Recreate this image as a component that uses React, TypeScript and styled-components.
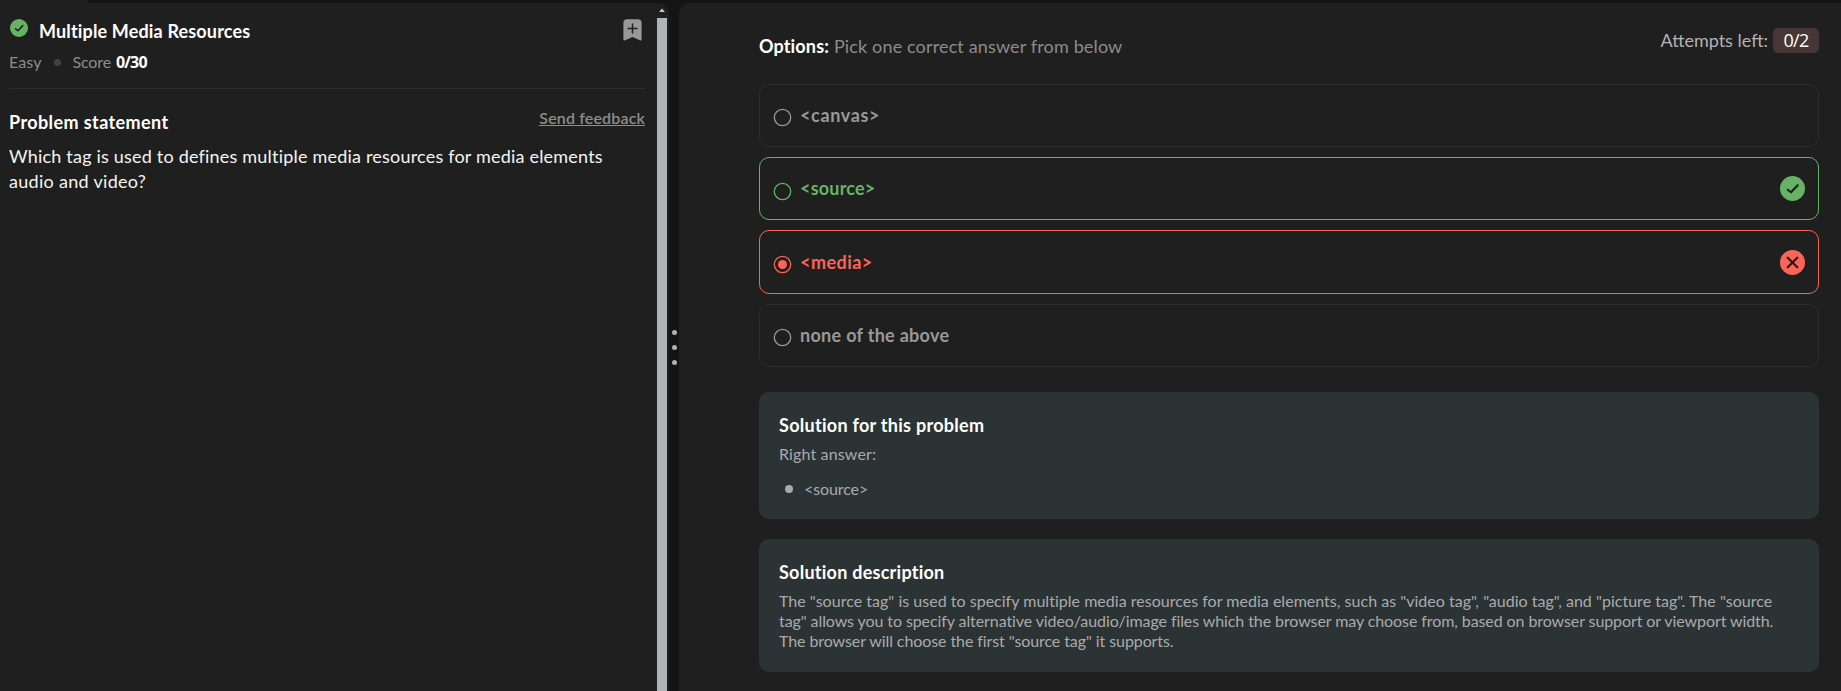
import React from "react";
import styled, { createGlobalStyle } from "styled-components";

const color = {
  page: "#141414",
  panel: "#1f1f1f",
  line: "#2d2d2d",
  white: "#ffffff",
  muted: "#8c8c8c",
  soft: "#a9abab",
  green: "#66b366",
  red: "#fb6559",
  card: "#2c3335",
};

const GlobalStyle = createGlobalStyle`
  * { box-sizing: border-box; }
  body {
    margin: 0;
    background: ${color.page};
    font-family: Lato, "Open Sans", sans-serif;
    overflow: hidden;
  }
`;

const Text = styled.span<{ $spacing?: number }>`
  letter-spacing: ${(p) => p.$spacing ?? 0}px;
  white-space: nowrap;
`;

const Page = styled.div`
  display: flex;
  flex-direction: column;
  height: 691px;
`;

const TopStrip = styled.div`
  flex: none;
  width: 88px;
  height: 3px;
  background: ${color.panel};
`;

const Workspace = styled.main`
  display: flex;
  flex: 1;
  min-height: 0;
`;

const ProblemPanel = styled.section`
  display: flex;
  width: 669px;
  padding-right: 2px;
  background: ${color.panel};
  border-top-right-radius: 10px;
`;

const ProblemBody = styled.div`
  flex: 1;
  padding: 16px 12px 0 9px;
`;

const ScrollTrack = styled.div`
  display: flex;
  flex-direction: column;
  align-items: center;
  width: 10px;
`;

const ScrollArrow = styled.svg`
  display: block;
  flex: none;
  width: 10px;
  height: 15px;
`;

const ScrollThumb = styled.div`
  flex: 1;
  width: 10px;
  background: #b2b3b9;
`;

const Splitter = styled.div`
  display: flex;
  flex-direction: column;
  align-items: center;
  gap: 10px;
  width: 10px;
  padding: 327px 0 0 1px;
`;

const SplitterDot = styled.i`
  width: 5px;
  height: 5px;
  border-radius: 50%;
  background: #b0b0b0;
`;

const ProblemHeader = styled.header`
  display: flex;
  justify-content: space-between;
  padding-bottom: 16px;
  border-bottom: 1px solid ${color.line};
`;

const TitleRow = styled.div`
  display: flex;
  align-items: flex-start;
  height: 24px;
  padding-left: 1px;
`;

const Title = styled.h1`
  margin: 0 0 0 10px;
  padding-left: 1px;
  font-size: 18px;
  font-weight: 700;
  line-height: 24px;
  color: ${color.white};
`;

const Meta = styled.div`
  display: flex;
  align-items: center;
  margin-top: 9px;
  font-size: 16px;
  line-height: 20px;
  color: ${color.muted};
`;

const MetaDot = styled.i`
  width: 7px;
  height: 7px;
  margin: 1px 12px 0 12px;
  border-radius: 50%;
  background: #424242;
`;

const Points = styled.strong`
  margin-left: 5px;
  font-family: "Open Sans", sans-serif;
  font-size: 16px;
  font-weight: 700;
  color: ${color.white};
`;

const BookmarkIcon = styled.svg`
  display: block;
  width: 19px;
  height: 22px;
  margin: 0 3px 0 0;
`;

const StatementHead = styled.div`
  display: flex;
  justify-content: space-between;
  align-items: flex-start;
  padding-top: 19px;
`;

const Heading = styled.h2`
  margin: 0;
  font-size: 18px;
  font-weight: 700;
  line-height: 24px;
  color: ${color.white};
`;

const StatementHeading = styled(Heading)`
  margin-top: 2px;
`;

const FeedbackLink = styled.a`
  height: 18px;
  border-bottom: 1px solid ${color.muted};
  font-size: 16px;
  font-weight: 600;
  line-height: 20px;
  color: ${color.muted};
`;

const Statement = styled.p`
  display: flex;
  flex-direction: column;
  margin: 10px 0 0;
  font-size: 18px;
  line-height: 25px;
  color: #f4f4f4;
`;

const AnswerPanel = styled.section`
  flex: 1;
  padding: 25px 22px 0 80px;
  background: ${color.panel};
  border-top-left-radius: 10px;
`;

const AnswerHead = styled.header`
  display: flex;
  justify-content: space-between;
  align-items: flex-start;
  height: 55.7px;
  font-size: 18px;
`;

const Prompt = styled.div`
  display: flex;
  gap: 5px;
  margin-top: 6px;
  line-height: 24px;
  color: ${color.muted};

  b {
    color: ${color.white};
  }
`;

const Attempts = styled.div`
  display: flex;
  align-items: center;
  gap: 5px;
  line-height: 25px;
  color: #b3b3b3;
`;

const AttemptsBadge = styled.span`
  display: flex;
  justify-content: center;
  width: 46px;
  height: 25px;
  border-radius: 5px;
  background: #483637;
  font-family: "Open Sans", sans-serif;
  color: ${color.white};
`;

const OptionList = styled.div`
  display: flex;
  flex-direction: column;
  gap: 10px;
`;

const Option = styled.label<{ $tone: string; $edge: string }>`
  display: flex;
  align-items: center;
  height: 63.33px;
  padding: 0 13px 0 13px;
  border: 1px solid ${(p) => p.$edge};
  border-radius: 10px;
  font-size: 18px;
  font-weight: 700;
  line-height: 24px;
  color: ${(p) => p.$tone};
`;

const RadioMark = styled.svg`
  display: block;
  width: 19px;
  height: 19px;
  margin: 5px 8px 0 0;
`;

const OptionLabel = styled(Text)`
  flex: 1;
  padding-bottom: 1px;
`;

const StatusIcon = styled.svg<{ $size: number }>`
  display: block;
  flex: none;
  width: ${(p) => p.$size}px;
  height: ${(p) => p.$size}px;
`;

const Card = styled.article<{ $top: number; $height: number }>`
  height: ${(p) => p.$height}px;
  margin-top: ${(p) => p.$top}px;
  padding: 21px 20px 0;
  border-radius: 10px;
  background: ${color.card};
`;

const CardText = styled.p`
  display: flex;
  flex-direction: column;
  margin: 7px 0 0;
  font-size: 16px;
  line-height: 20px;
  color: ${color.soft};
`;

const AnswerLine = styled.p`
  display: flex;
  align-items: center;
  gap: 11px;
  margin: 15px 0 0;
  padding-left: 6px;
  font-size: 16px;
  line-height: 20px;
  color: ${color.soft};
`;

const Bullet = styled.i`
  width: 8px;
  height: 8px;
  border-radius: 50%;
  background: ${color.soft};
`;

const CheckBadge = ({ size }: { size: number }) => (
  <StatusIcon $size={size} viewBox="0 0 25 25">
    <circle cx="12.5" cy="12.5" r="12.5" fill={color.green} />
    <path d="M7.8 13.7 11 16.3 17.7 9.2" fill="none" stroke={color.panel} strokeWidth="2.1" strokeLinecap="round" strokeLinejoin="round" />
  </StatusIcon>
);

const CrossBadge = () => (
  <StatusIcon $size={25} viewBox="0 0 25 25">
    <circle cx="12.5" cy="12.5" r="12.5" fill={color.red} />
    <path d="M7.7 7.7 17.3 17.3M17.3 7.7 7.7 17.3" fill="none" stroke={color.panel} strokeWidth="2.2" strokeLinecap="round" />
  </StatusIcon>
);

type Choice = { label: string; spacing: number; state?: "right" | "wrong" };

const choices: Choice[] = [
  { label: "<canvas>", spacing: 0.65 },
  { label: "<source>", spacing: 0.2, state: "right" },
  { label: "<media>", spacing: 0.45, state: "wrong" },
  { label: "none of the above", spacing: 0.3 },
];

const ChoiceRow = ({ label, spacing, state }: Choice) => {
  const tone = state === "right" ? color.green : state === "wrong" ? color.red : "#999999";
  return (
    <Option $tone={tone} $edge={state ? tone : color.line}>
      <RadioMark viewBox="0 0 19 19">
        <circle cx="9.5" cy="9.5" r="8.2" fill="none" stroke="currentColor" strokeWidth="1.3" />
        {state === "wrong" && <circle cx="9.5" cy="9.5" r="4.5" fill="currentColor" />}
      </RadioMark>
      <OptionLabel $spacing={spacing}>{label}</OptionLabel>
      {state === "right" && <CheckBadge size={25} />}
      {state === "wrong" && <CrossBadge />}
    </Option>
  );
};

export default function App() {
  return (
    <Page>
      <GlobalStyle />
      <TopStrip />
      <Workspace>
        <ProblemPanel>
          <ProblemBody>
            <ProblemHeader>
              <div>
                <TitleRow>
                  <CheckBadge size={18} />
                  <Title>
                    <Text $spacing={0.155}>Multiple Media Resources</Text>
                  </Title>
                </TitleRow>
                <Meta>
                  <Text $spacing={0.1}>Easy</Text>
                  <MetaDot />
                  <Text $spacing={-0.15}>Score</Text>
                  <Points>
                    <Text $spacing={-0.8}>0/30</Text>
                  </Points>
                </Meta>
              </div>
              <BookmarkIcon viewBox="0 0 19 22">
                <path d="M4 0.3H15Q18.6 0.3 18.6 4V20.6Q18.6 21.8 17.4 21.4L9.5 18 1.6 21.4Q0.4 21.8 0.4 20.6V4Q0.4 0.3 4 0.3Z" fill="#999999" />
                <path d="M9.5 5V14M5 9.5H14" stroke={color.panel} strokeWidth="1.5" strokeLinecap="round" />
              </BookmarkIcon>
            </ProblemHeader>
            <StatementHead>
              <StatementHeading>
                <Text $spacing={0.4}>Problem statement</Text>
              </StatementHeading>
              <FeedbackLink>
                <Text $spacing={0.15}>Send feedback</Text>
              </FeedbackLink>
            </StatementHead>
            <Statement>
              <Text $spacing={0.2}>Which tag is used to defines multiple media resources for media elements</Text>
              <Text $spacing={0.3}>audio and video?</Text>
            </Statement>
          </ProblemBody>
          <ScrollTrack>
            <ScrollArrow viewBox="0 0 10 15">
              <path d="M5 5.5 8 9H2Z" fill="#c4c4c8" />
            </ScrollArrow>
            <ScrollThumb />
          </ScrollTrack>
        </ProblemPanel>

        <Splitter>
          <SplitterDot />
          <SplitterDot />
          <SplitterDot />
        </Splitter>

        <AnswerPanel>
          <AnswerHead>
            <Prompt>
              <b>
                <Text $spacing={0.146}>Options:</Text>
              </b>
              <Text $spacing={0.143}>Pick one correct answer from below</Text>
            </Prompt>
            <Attempts>
              <Text $spacing={0}>Attempts left:</Text>
              <AttemptsBadge>
                <Text $spacing={-0.7}>0/2</Text>
              </AttemptsBadge>
            </Attempts>
          </AnswerHead>

          <OptionList>
            {choices.map((choice) => (
              <ChoiceRow key={choice.label} {...choice} />
            ))}
          </OptionList>

          <Card $top={25} $height={127}>
            <Heading>
              <Text $spacing={0.28}>Solution for this problem</Text>
            </Heading>
            <CardText>
              <Text $spacing={0.14}>Right answer:</Text>
            </CardText>
            <AnswerLine>
              <Bullet />
              <Text $spacing={-0.1}>&lt;source&gt;</Text>
            </AnswerLine>
          </Card>

          <Card $top={20} $height={133}>
            <Heading>
              <Text $spacing={0.25}>Solution description</Text>
            </Heading>
            <CardText>
              <Text $spacing={0.02}>
                The "source tag" is used to specify multiple media resources for media elements, such as "video tag", "audio tag", and "picture tag". The "source
              </Text>
              <Text $spacing={-0.09}>
                tag" allows you to specify alternative video/audio/image files which the browser may choose from, based on browser support or viewport width.
              </Text>
              <Text $spacing={-0.09}>The browser will choose the first "source tag" it supports.</Text>
            </CardText>
          </Card>
        </AnswerPanel>
      </Workspace>
    </Page>
  );
}
